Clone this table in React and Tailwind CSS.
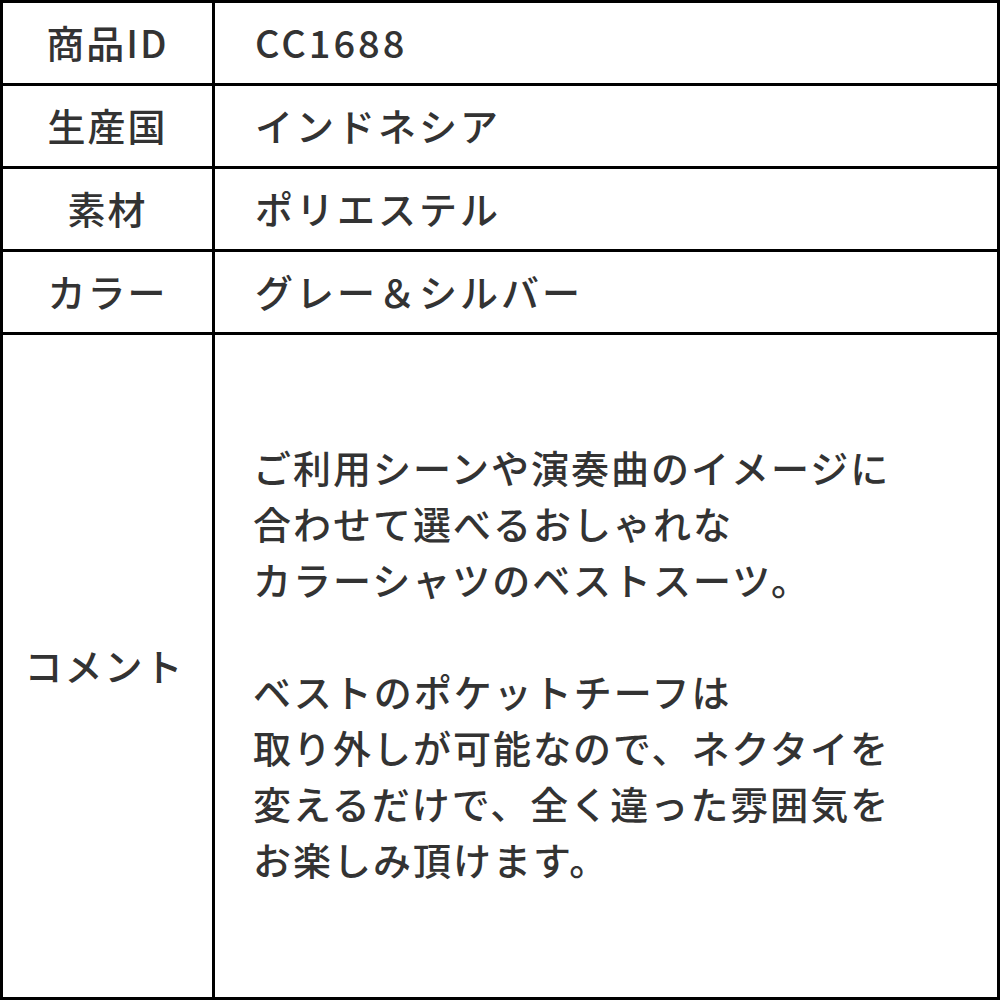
import React from 'react';

const ROWS = [
  { label: '商品ID', value: 'CC1688' },
  { label: '生産国', value: 'インドネシア' },
  { label: '素材', value: 'ポリエステル' },
  { label: 'カラー', value: 'グレー＆シルバー' },
];

const COMMENT = [
  'ご利用シーンや演奏曲のイメージに',
  '合わせて選べるおしゃれな',
  'カラーシャツのベストスーツ。',
  '',
  'ベストのポケットチーフは',
  '取り外しが可能なので、ネクタイを',
  '変えるだけで、全く違った雰囲気を',
  'お楽しみ頂けます。',
];

export default function App() {
  return (
    <div
      className="w-[1000px] h-[1000px] bg-white border-[3px] border-black flex flex-col text-[#333] text-[38px] tracking-[2px] font-medium"
      style={{ fontFamily: '"Noto Sans CJK JP", "Noto Sans", sans-serif' }}
    >
      {ROWS.map((row) => (
        <div key={row.label} className="flex h-[83px] shrink-0 border-b-[3px] border-black">
          <div className="w-[212px] shrink-0 border-r-[3px] border-black flex items-center justify-center pb-1">
            {row.label}
          </div>
          <div className="flex-1 flex items-center pl-[40px] pb-1 tracking-[3px]">{row.value}</div>
        </div>
      ))}
      <div className="flex flex-1">
        <div className="w-[212px] shrink-0 border-r-[3px] border-black flex items-center justify-center pr-[6px] pb-[4px]">
          コメント
        </div>
        <div className="flex-1 flex flex-col justify-center pl-[38px] pb-[6px] leading-[56px]">
          {COMMENT.map((line, i) => (
            <div key={i} className="h-[56px]">{line}</div>
          ))}
        </div>
      </div>
    </div>
  );
}
